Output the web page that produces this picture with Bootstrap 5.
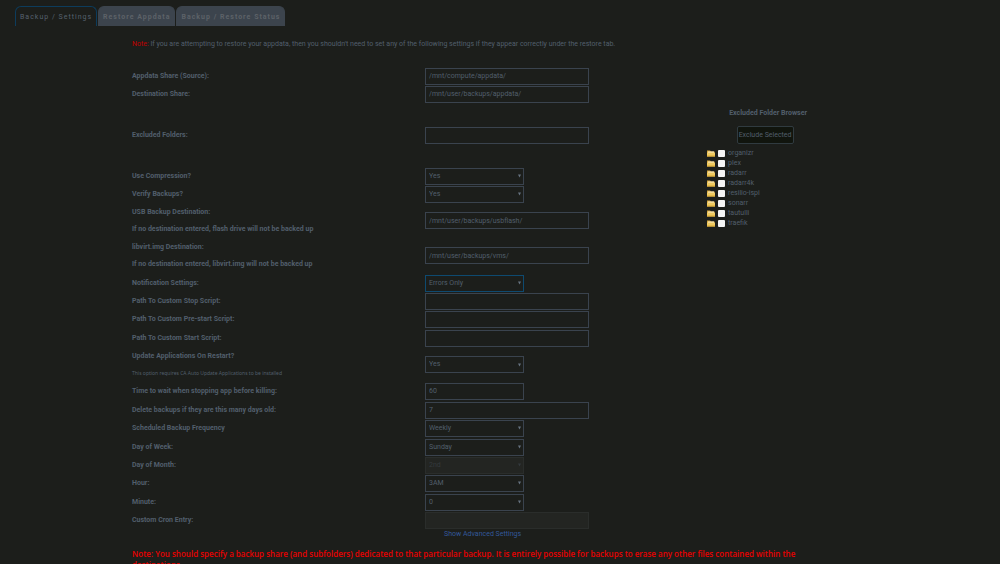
<!DOCTYPE html>
<html lang="en">
<head>
<meta charset="utf-8">
<meta name="viewport" content="width=device-width, initial-scale=1">
<title>Backup / Restore Appdata</title>
<link href="https://cdn.jsdelivr.net/npm/bootstrap@5.3.0/dist/css/bootstrap.min.css" rel="stylesheet">
<style>
:root { --ink: #525e6c; --line: #3a434e; --paper: #1c1e1b; }
html { overflow: hidden; }
body { background: var(--paper); color: var(--ink); font: 7px/18px Roboto, "Noto Sans", sans-serif; }
.tabs { padding: 6px 15px 0; gap: 1px; border: 0; }
.tabs .nav-link { height: 20px; padding: 0 4px; border: 1px solid #3c444d; border-bottom: 0; border-radius: 6px 6px 0 0; background: #3c444d; color: #5c6268; font-size: 7px; font-weight: 700; line-height: 20px; letter-spacing: 1px; }
.tabs .nav-link.active { background: var(--paper); border-color: #0d3c5c; color: #56616e; font-weight: 400; }
.page { padding: 0 13.2%; }
.intro { padding-top: 10px; margin-bottom: 14px; }
.intro b { color: #c00000; font-weight: 400; }
.settings { width: 78%; }
.group { margin-bottom: 1px; }
.folders-group { margin: 23px 0; }
.line { min-height: 18px; }
.line > label, .caption { width: 293px; flex: none; font-weight: 700; }
.caption label, .caption span { display: block; }
.caption span { line-height: 17px; }
.caption .fine { font-size: 5px; font-weight: 400; font-family: "Noto Sans", sans-serif; }
.field { width: 164px; height: 17px; padding: 0 3px; border: 1px solid var(--line); border-radius: 0; background: transparent; color: var(--ink); font-size: 7px; line-height: 15px; box-shadow: none; }
.field:focus { background: transparent; color: var(--ink); box-shadow: none; }
.field.short { width: 99px; }
.field:disabled { background-color: #232522; border-color: #2a2d2b; color: #343a3d; opacity: 1; }
select.field { appearance: none; background: url("data:image/svg+xml,%3Csvg xmlns='http://www.w3.org/2000/svg' viewBox='0 0 4 4'%3E%3Cpath d='M0 0h4L2 4z' fill='%23667380'/%3E%3C/svg%3E") no-repeat right 2px center / 3px 4px; }
select.field:disabled { background-image: url("data:image/svg+xml,%3Csvg xmlns='http://www.w3.org/2000/svg' viewBox='0 0 4 4'%3E%3Cpath d='M0 0h4L2 4z' fill='%2333393d'/%3E%3C/svg%3E"); }
select.field.current { border-color: #0e4a70; }
.advanced { margin-left: 312px; color: #33589a; line-height: 8px; }
.warning { width: 92%; color: #e80000; font-family: "Open Sans", "Noto Sans", sans-serif; font-size: 8px; font-weight: 600; line-height: 11px; margin: 10px 0 0; }
.browser { width: 124px; margin-top: 37px; }
.browser h2 { font-size: 7px; font-weight: 700; line-height: 18px; margin: 0; }
.browser .btn { margin: 4px 6px 4px 0; padding: 0 1px; border: 1px solid #303b40; border-radius: 2px; background: #11150e; color: var(--ink); font-size: 7px; line-height: 16px; }
.folder { height: 10px; gap: 3px; line-height: 10px; padding-left: 1px; }
.folder svg { width: 8px; height: 7px; }
.folder input { appearance: none; width: 7px; height: 7px; margin: 0; border-radius: 1px; background: #f4f4f4; }
.folder input:checked { background: #2f6fab; }
</style>
</head>
<body>
<nav class="nav nav-tabs tabs">
  <button class="nav-link active" type="button">Backup / Settings</button>
  <button class="nav-link" type="button">Restore Appdata</button>
  <button class="nav-link" type="button">Backup / Restore Status</button>
</nav>
<main class="page">
  <p class="intro"><b>Note:</b> If you are attempting to restore your appdata, then you shouldn't need to set any of the following settings if they appear correctly under the restore tab.</p>
  <div class="d-flex align-items-start">
    <form class="settings">
      <div class="group">
        <div class="line d-flex align-items-center"><label for="source">Appdata Share (Source):</label><input class="form-control field" id="source" value="/mnt/compute/appdata/"></div>
        <div class="line d-flex align-items-center"><label for="dest">Destination Share:</label><input class="form-control field" id="dest" value="/mnt/user/backups/appdata/"></div>
      </div>
      <div class="folders-group">
        <div class="line d-flex align-items-center"><label for="excluded">Excluded Folders:</label><input class="form-control field" id="excluded"></div>
      </div>
      <div class="group">
        <div class="line d-flex align-items-center"><label for="compress">Use Compression?</label><select class="field short" id="compress"><option>Yes</option><option>No</option></select></div>
        <div class="line d-flex align-items-center"><label for="verify">Verify Backups?</label><select class="field short" id="verify"><option>Yes</option><option>No</option></select></div>
        <div class="line d-flex align-items-center"><div class="caption"><label for="usb">USB Backup Destination:</label><span>If no destination entered, flash drive will not be backed up</span></div><input class="form-control field" id="usb" value="/mnt/user/backups/usbflash/"></div>
        <div class="line d-flex align-items-center"><div class="caption"><label for="libvirt">libvirt.img Destination:</label><span>If no destination entered, libvirt.img will not be backed up</span></div><input class="form-control field" id="libvirt" value="/mnt/user/backups/vms/"></div>
      </div>
      <div class="group">
        <div class="line d-flex align-items-center"><label for="notify">Notification Settings:</label><select class="field short current" id="notify"><option>Errors Only</option><option>All</option></select></div>
        <div class="line d-flex align-items-center"><label for="stop">Path To Custom Stop Script:</label><input class="form-control field" id="stop"></div>
        <div class="line d-flex align-items-center"><label for="prestart">Path To Custom Pre-start Script:</label><input class="form-control field" id="prestart"></div>
      </div>
      <div class="group">
        <div class="line d-flex align-items-center"><label for="start">Path To Custom Start Script:</label><input class="form-control field" id="start"></div>
        <div class="line d-flex align-items-center"><div class="caption"><label for="update">Update Applications On Restart?</label><span class="fine">This option requires CA Auto Update Applications to be installed</span></div><select class="field short" id="update"><option>Yes</option><option>No</option></select></div>
        <div class="line d-flex align-items-center"><label for="wait">Time to wait when stopping app before killing:</label><input class="form-control field short" id="wait" value="60"></div>
      </div>
      <div class="group">
        <div class="line d-flex align-items-center"><label for="age">Delete backups if they are this many days old:</label><input class="form-control field" id="age" value="7"></div>
        <div class="line d-flex align-items-center"><label for="frequency">Scheduled Backup Frequency</label><select class="field short" id="frequency"><option>Weekly</option><option>Daily</option></select></div>
      </div>
      <div class="group">
        <div class="line d-flex align-items-center"><label for="weekday">Day of Week:</label><select class="field short" id="weekday"><option>Sunday</option><option>Monday</option></select></div>
        <div class="line d-flex align-items-center"><label for="monthday">Day of Month:</label><select class="field short" id="monthday" disabled><option>2nd</option></select></div>
        <div class="line d-flex align-items-center"><label for="hour">Hour:</label><select class="field short" id="hour"><option>3AM</option><option>4AM</option></select></div>
      </div>
      <div class="group">
        <div class="line d-flex align-items-center"><label for="minute">Minute:</label><select class="field short" id="minute"><option>0</option><option>5</option></select></div>
        <div class="line d-flex align-items-center"><label for="cron">Custom Cron Entry:</label><input class="form-control field" id="cron" disabled></div>
      </div>
      <a class="advanced d-block text-decoration-none" href="#">Show Advanced Settings</a>
    </form>
    <aside class="browser flex-shrink-0">
      <h2 class="text-center">Excluded Folder Browser</h2>
      <div class="text-center"><button class="btn" type="button">Exclude Selected</button></div>
      <svg class="d-none"><symbol id="folder" viewBox="0 0 16 14"><path d="M0 1h6l2 2h7v3H0z" fill="#d6a638"/><path d="M2 3h12v3H2z" fill="#f7eccb"/><path d="M0 5h16v8H0z" fill="#f0cb62"/><path d="M0 11h16v2H0z" fill="#dca931"/></symbol></svg>
      <label class="folder d-flex align-items-center"><svg><use href="#folder"/></svg><input type="checkbox">organizr</label>
      <label class="folder d-flex align-items-center"><svg><use href="#folder"/></svg><input type="checkbox">plex</label>
      <label class="folder d-flex align-items-center"><svg><use href="#folder"/></svg><input type="checkbox">radarr</label>
      <label class="folder d-flex align-items-center"><svg><use href="#folder"/></svg><input type="checkbox">radarr4k</label>
      <label class="folder d-flex align-items-center"><svg><use href="#folder"/></svg><input type="checkbox">resilio-ispi</label>
      <label class="folder d-flex align-items-center"><svg><use href="#folder"/></svg><input type="checkbox">sonarr</label>
      <label class="folder d-flex align-items-center"><svg><use href="#folder"/></svg><input type="checkbox">tautulli</label>
      <label class="folder d-flex align-items-center"><svg><use href="#folder"/></svg><input type="checkbox">traefik</label>
    </aside>
  </div>
  <p class="warning">Note: You should specify a backup share (and subfolders) dedicated to that particular backup. It is entirely possible for backups to erase any other files contained within the destinations.</p>
</main>
<script src="https://cdn.jsdelivr.net/npm/bootstrap@5.3.0/dist/js/bootstrap.bundle.min.js"></script>
</body>
</html>
